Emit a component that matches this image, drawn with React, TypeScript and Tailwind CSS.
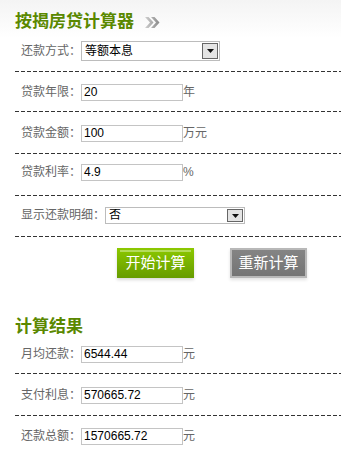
import React from "react"

const font = { fontFamily: '"Liberation Sans", "Noto Sans CJK SC", sans-serif' }

function Dash() {
  return (
    <div className="ml-[15px] h-px bg-[repeating-linear-gradient(90deg,#333_0_4px,transparent_4px_6px)]" />
  )
}

function Field({ value, unit }: { value: string; unit?: string }) {
  return (
    <>
      <div className="flex h-[17px] w-[102px] items-center border border-[#c4c4c4] bg-white pl-[2px] text-[12px] leading-[15px] text-black">
        {value}
      </div>
      {unit && <span className="text-[12px] leading-[17px] text-[#666]">{unit}</span>}
    </>
  )
}

function Select({ value, w, h }: { value: string; w: string; h: string }) {
  return (
    <div className={`flex items-center border border-[#bcbcbc] bg-white ${w} ${h}`}>
      <span className="flex-1 pl-[3px] text-[12px] leading-[15px] text-black">{value}</span>
      <div className="mr-px flex h-[calc(100%-2px)] w-[16px] items-center justify-center border border-[#666] bg-[#e4e4e4]">
        <svg width="7" height="4" viewBox="0 0 7 4">
          <path d="M0 0h7L3.5 4z" fill="#111" />
        </svg>
      </div>
    </div>
  )
}

function Label({ children }: { children: React.ReactNode }) {
  return <span className="pl-[21px] text-[12px] leading-[17px] text-[#666]">{children}</span>
}

export default function App() {
  return (
    <div className="w-[341px] h-[451px] overflow-hidden bg-white" style={font}>
      {/* 标题 */}
      <div className="flex h-[38px] items-center gap-[11px] bg-gradient-to-b from-[#f4f4f4] to-white pl-[15px] pt-[6px]">
        <span className="text-[17px] font-bold leading-[22px] text-[#5a8800]">按揭房贷计算器</span>
        <svg width="15" height="11" viewBox="0 0 15 11">
          <defs>
            <linearGradient id="ch" x1="0" x2="1">
              <stop offset="0" stopColor="#cfcfcf" />
              <stop offset="1" stopColor="#8a8a8a" />
            </linearGradient>
          </defs>
          <path d="M0 0h3.5l5 5.5-5 5.5H0l5-5.5z M6 0h3.5l5 5.5-5 5.5H6l5-5.5z" fill="url(#ch)" />
        </svg>
      </div>

      <div className="flex items-center pt-[3px] pb-[10px]">
        <Label>还款方式：</Label>
        <Select value="等额本息" w="w-[139px]" h="h-[20px]" />
      </div>
      <Dash />

      <div className="flex items-center pt-[12px] pb-[10px]">
        <Label>贷款年限：</Label>
        <Field value="20" unit="年" />
      </div>
      <Dash />

      <div className="flex items-center pt-[13px] pb-[11px]">
        <Label>贷款金额：</Label>
        <Field value="100" unit="万元" />
      </div>
      <Dash />

      <div className="flex items-center pt-[10px] pb-[14px]">
        <Label>贷款利率：</Label>
        <Field value="4.9" unit="%" />
      </div>
      <Dash />

      <div className="flex items-center pt-[11px] pb-[12px]">
        <Label>显示还款明细：</Label>
        <Select value="否" w="w-[140px]" h="h-[17px]" />
      </div>
      <Dash />

      {/* 按钮 */}
      <div className="flex pt-[11px] pl-[117px] gap-[36px]">
        <button className="relative h-[30px] w-[77px] bg-gradient-to-b from-[#8cc800] to-[#669c00] text-[15px] text-white shadow-[0_2px_3px_rgba(0,0,0,0.15)]">
          <span className="absolute left-[3px] right-[3px] top-[2px] h-[2px] bg-[#b4dc5a]" />
          开始计算
        </button>
        <button className="h-[30px] w-[77px] border-2 border-[#b8b8b8] bg-gradient-to-b from-[#848484] to-[#747474] text-[15px] text-white shadow-[0_2px_3px_rgba(0,0,0,0.12)]">
          重新计算
        </button>
      </div>

      {/* 结果 */}
      <div className="pl-[15px] pt-[38px] text-[17px] font-bold leading-[22px] text-[#5a8800]">计算结果</div>

      <div className="flex items-center pt-[8px] pb-[10px]">
        <Label>月均还款：</Label>
        <Field value="6544.44" unit="元" />
      </div>
      <Dash />

      <div className="flex items-center pt-[13px] pb-[11px]">
        <Label>支付利息：</Label>
        <Field value="570665.72" unit="元" />
      </div>
      <Dash />

      <div className="flex items-center pt-[12px] pb-[10px]">
        <Label>还款总额：</Label>
        <Field value="1570665.72" unit="元" />
      </div>
    </div>
  )
}
